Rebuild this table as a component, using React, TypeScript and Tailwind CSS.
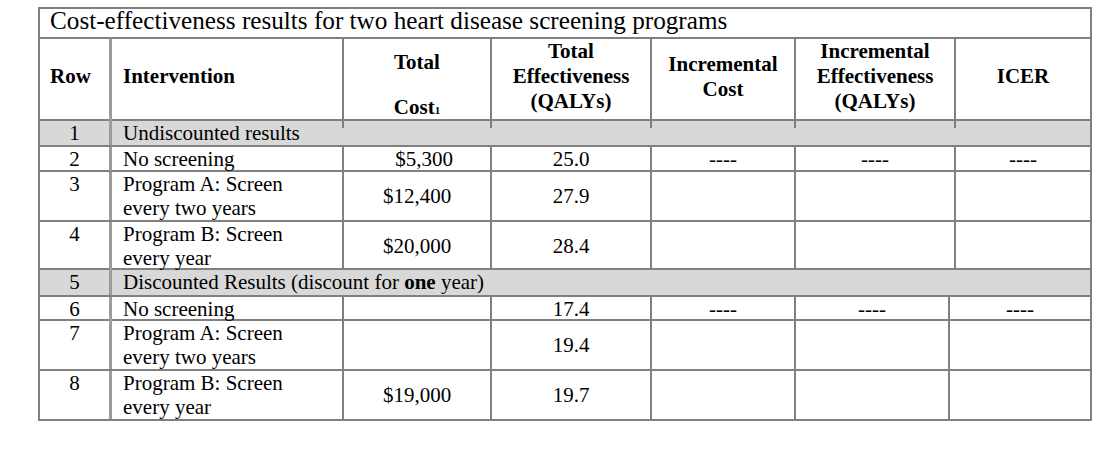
import React from "react";

const B = "border-[#808080]";

function Cell({
  children,
  className = "",
}: {
  children?: React.ReactNode;
  className?: string;
}) {
  return <div className={`border-r-2 ${B} ${className}`}>{children}</div>;
}

const colsTop = "grid-cols-[72px_232px_148px_160px_144px_160px_134px]";
const colsBottom = "grid-cols-[72px_232px_148px_160px_144px_154px_140px]";

function FirstCell({ children }: { children?: React.ReactNode }) {
  return (
    <div className="border-r-[3px] border-[#9c9c9c] text-center">{children}</div>
  );
}

function DataRow({
  n,
  label,
  cost,
  eff,
  dashes,
  h,
  last,
  bottom,
  costClass = "",
}: {
  n: string;
  label: React.ReactNode;
  cost?: string;
  eff?: string;
  dashes?: boolean;
  h: string;
  last?: boolean;
  bottom?: boolean;
  costClass?: string;
}) {
  return (
    <div
      className={`grid ${bottom ? colsBottom : colsTop} ${h} ${
        last ? "" : `border-b-2 ${B}`
      } leading-[24px]`}
    >
      <FirstCell>{n}</FirstCell>
      <Cell className="pl-[11px]">{label}</Cell>
      <Cell className={`flex items-center justify-center ${costClass}`}>{cost}</Cell>
      <Cell className="flex items-center justify-center">{eff}</Cell>
      <Cell className="flex items-center justify-center">{dashes ? "----" : ""}</Cell>
      <Cell className="flex items-center justify-center">{dashes ? "----" : ""}</Cell>
      <div className="flex items-center justify-center">{dashes ? "----" : ""}</div>
    </div>
  );
}

function GrayRow({ n, children, h }: { n: string; children: React.ReactNode; h: string }) {
  return (
    <div className={`grid ${colsTop} ${h} border-b-2 ${B} bg-[#d8d8d8] leading-[24px]`}>
      <FirstCell>{n}</FirstCell>
      <div className="col-span-6 pl-[11px] whitespace-nowrap">{children}</div>
    </div>
  );
}

export default function App() {
  return (
    <div
      className="w-[1120px] h-[462px] bg-white pt-[7px] pl-[38px] text-black text-[21px]"
      style={{ fontFamily: '"Liberation Serif", "Times New Roman", serif' }}
    >
      <div className={`w-[1054px] border-2 ${B}`}>
        <div className={`h-[30px] border-b-2 ${B} pl-[10px] text-[25.2px] leading-[24px]`}>
          Cost-effectiveness results for two heart disease screening programs
        </div>
        <div className={`grid ${colsTop} h-[82px] border-b-2 ${B} font-bold leading-[25px]`}>
          <div className="border-r-[3px] border-[#9c9c9c] flex items-center pl-[10px] pb-[14px]">
            Row
          </div>
          <Cell className="flex items-center pl-[11px] pb-[14px]">Intervention</Cell>
          <Cell className="text-center pt-[11px]">
            <div>Total</div>
            <div className="mt-[20px]">
              Cost<span className="text-[11px] align-baseline">1</span>
            </div>
          </Cell>
          <Cell className="flex flex-col items-center justify-center text-center pb-[14px]">
            <div>Total</div>
            <div>Effectiveness</div>
            <div>(QALYs)</div>
          </Cell>
          <Cell className="flex flex-col items-center justify-center text-center pb-[14px]">
            <div>Incremental</div>
            <div>Cost</div>
          </Cell>
          <Cell className="flex flex-col items-center justify-center text-center pb-[14px]">
            <div>Incremental</div>
            <div>Effectiveness</div>
            <div>(QALYs)</div>
          </Cell>
          <div className="flex items-center justify-center pb-[14px]">ICER</div>
        </div>

        <GrayRow n="1" h="h-[26px]">
          Undiscounted results
        </GrayRow>
        <DataRow n="2" label="No screening" cost="$5,300" eff="25.0" dashes h="h-[25px]" costClass="pl-[14px]" />
        <DataRow
          n="3"
          label={
            <>
              Program A: Screen
              <br />
              every two years
            </>
          }
          cost="$12,400"
          eff="27.9"
          h="h-[50px]"
        />
        <DataRow
          n="4"
          label={
            <>
              Program B: Screen
              <br />
              every year
            </>
          }
          cost="$20,000"
          eff="28.4"
          h="h-[48px]"
        />
        <GrayRow n="5" h="h-[27px]">
          Discounted Results (discount for <b>one</b> year)
        </GrayRow>
        <DataRow n="6" label="No screening" eff="17.4" dashes h="h-[24px]" bottom />
        <DataRow
          n="7"
          label={
            <>
              Program A: Screen
              <br />
              every two years
            </>
          }
          eff="19.4"
          h="h-[50px]"
          bottom
        />
        <DataRow
          n="8"
          label={
            <>
              Program B: Screen
              <br />
              every year
            </>
          }
          cost="$19,000"
          eff="19.7"
          h="h-[48px]"
          last
          bottom
        />
      </div>
    </div>
  );
}
